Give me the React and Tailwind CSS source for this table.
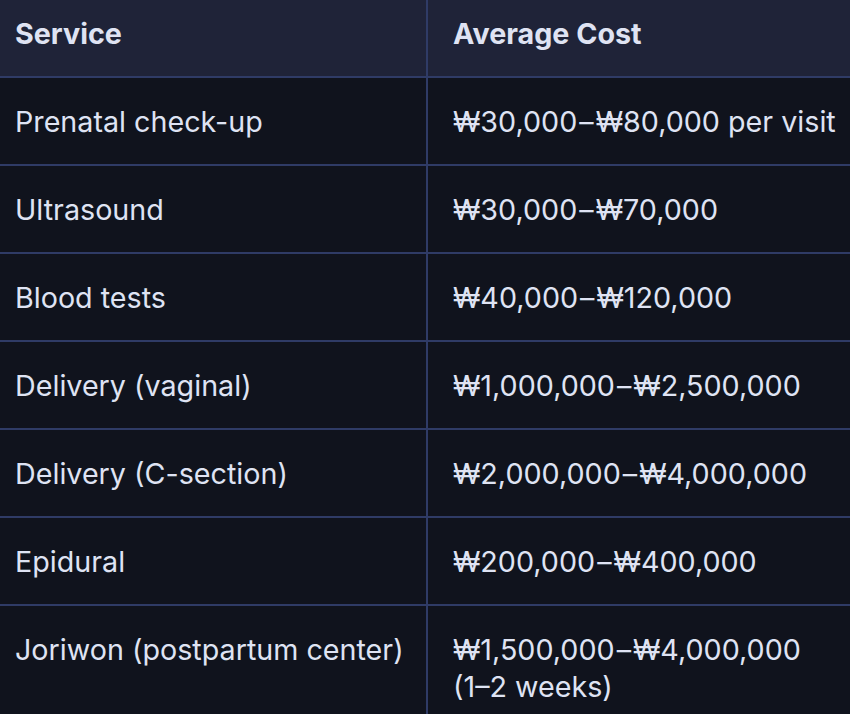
const rows = [
  ["Prenatal check-up", "₩30,000–₩80,000 per visit"],
  ["Ultrasound", "₩30,000–₩70,000"],
  ["Blood tests", "₩40,000–₩120,000"],
  ["Delivery (vaginal)", "₩1,000,000–₩2,500,000"],
  ["Delivery (C-section)", "₩2,000,000–₩4,000,000"],
  ["Epidural", "₩200,000–₩400,000"],
  ["Joriwon (postpartum center)", "₩1,500,000–₩4,000,000", "(1–2 weeks)"],
];

// spread the range dash a little, the way the original font sets it
const Range = ({ text }) => {
  const [from, to] = text.split("–");
  return (
    <>
      {from}
      <span className="mx-[2px]">–</span>
      {to}
    </>
  );
};

export default function App() {
  return (
    <div className="h-[714px] w-[850px] overflow-hidden bg-[#10131d] font-['Inter','Noto_Sans_CJK_KR',sans-serif] text-[28.7px] leading-[37px] text-[#dfe3f3]">
      <table className="w-[872px] table-fixed border-collapse">
        <colgroup>
          <col className="w-[427px]" />
          <col />
        </colgroup>
        <thead>
          <tr className="bg-[#1f2338]">
            <th className="h-[77px] border-b-2 border-r-2 border-[#2f3b66] px-[15px] pb-[9px] text-left font-bold">
              Service
            </th>
            <th className="h-[77px] border-b-2 border-[#2f3b66] pl-[25px] pr-[24px] pb-[9px] text-left font-bold">
              Average Cost
            </th>
          </tr>
        </thead>
        <tbody>
          {rows.map(([service, cost, note]) => (
            <tr key={service}>
              <td className="h-[88px] border-b-2 border-r-2 border-[#2f3b66] px-[15px] pt-[25px] pb-[24px] align-top">
                {service}
              </td>
              <td className="h-[88px] border-b-2 border-[#2f3b66] pl-[25px] pr-[24px] pt-[25px] pb-[24px] align-top">
                <Range text={cost} />
                {note ? (
                  <>
                    {" "}
                    <span className="whitespace-nowrap">{note}</span>
                  </>
                ) : null}
              </td>
            </tr>
          ))}
        </tbody>
      </table>
    </div>
  );
}
